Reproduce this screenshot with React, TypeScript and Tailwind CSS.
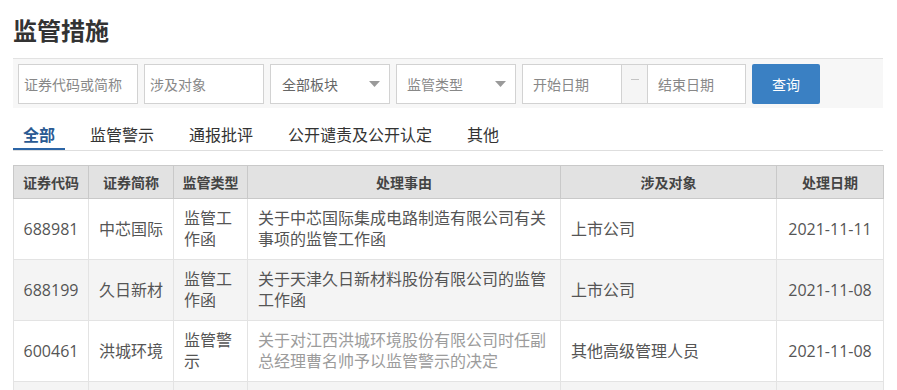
import React from "react";

const rows = [
  {
    code: "688981",
    name: "中芯国际",
    type: "监管工作函",
    reason: "关于中芯国际集成电路制造有限公司有关事项的监管工作函",
    target: "上市公司",
    date: "2021-11-11",
    visited: false,
    bg: "bg-white",
  },
  {
    code: "688199",
    name: "久日新材",
    type: "监管工作函",
    reason: "关于天津久日新材料股份有限公司的监管工作函",
    target: "上市公司",
    date: "2021-11-08",
    visited: false,
    bg: "bg-[#f4f4f4]",
  },
  {
    code: "600461",
    name: "洪城环境",
    type: "监管警示",
    reason: "关于对江西洪城环境股份有限公司时任副总经理曹名帅予以监管警示的决定",
    target: "其他高级管理人员",
    date: "2021-11-08",
    visited: true,
    bg: "bg-white",
  },
];

function Arrow() {
  return (
    <svg width="11" height="6" viewBox="0 0 11 6" className="shrink-0">
      <path d="M0 0 L11 0 L5.5 6 Z" fill="#9a9a9a" />
    </svg>
  );
}

export default function App() {
  const font = { fontFamily: '"Open Sans", "Noto Sans CJK SC", sans-serif' };
  return (
    <div className="w-[897px] h-[390px] overflow-hidden bg-white" style={font}>
      <div className="w-[870px] ml-[13px]">
        <h1 className="pt-[14px] text-[24px] leading-[34px] font-bold text-[#333]">监管措施</h1>

        <div className="mt-[10px] border-t border-[#e2e2e2] bg-[#f7f7f7] pl-[5px] pt-[5px] pb-[4px] flex items-center gap-[6px] text-[14px]">
          <div className="w-[120px] h-[40px] border border-[#d2d2d2] bg-white flex items-center pl-[5px] text-[#888]">
            证券代码或简称
          </div>
          <div className="w-[120px] h-[40px] border border-[#d2d2d2] bg-white flex items-center pl-[5px] text-[#888]">
            涉及对象
          </div>
          <div className="w-[120px] h-[40px] border border-[#d2d2d2] bg-white flex items-center justify-between pl-[11px] pr-[9px] text-[#666]">
            <span>全部板块</span>
            <Arrow />
          </div>
          <div className="w-[120px] h-[40px] border border-[#d2d2d2] bg-white flex items-center justify-between pl-[10px] pr-[9px] text-[#888]">
            <span>监管类型</span>
            <Arrow />
          </div>
          <div className="flex items-stretch h-[40px]">
            <div className="w-[100px] border border-[#d2d2d2] bg-white flex items-center pl-[10px] text-[#888]">
              开始日期
            </div>
            <div className="w-[25px] border-y border-[#d2d2d2] bg-[#f5f5f5] flex justify-center">
              <span className="mt-[14px] w-[8px] h-px bg-[#c4c4c4]" />
            </div>
            <div className="w-[99px] border border-[#d2d2d2] bg-white flex items-center pl-[10px] text-[#888]">
              结束日期
            </div>
          </div>
          <button className="w-[68px] h-[40px] rounded-[2px] bg-[#3a80c3] text-white text-[14px]">查询</button>
        </div>

        <div className="flex border-b border-[#dedede] text-[16px] leading-[22px] gap-[15px]">
          {["全部", "监管警示", "通报批评", "公开谴责及公开认定", "其他"].map((t, i) => (
            <div
              key={t}
              className={
                i === 0
                  ? "px-[10px] pt-[16px] pb-[2px] border-b-2 border-[#2c65a6] font-bold text-[#2a5a92]"
                  : "px-[10px] pt-[16px] pb-[2px] border-b-2 border-transparent text-[#333]"
              }
            >
              {t}
            </div>
          ))}
        </div>

        <table className="mt-[14px] w-[870px] table-fixed border-collapse">
          <colgroup>
            <col className="w-[75px]" />
            <col className="w-[85px]" />
            <col className="w-[74px]" />
            <col className="w-[313px]" />
            <col className="w-[216px]" />
            <col className="w-[107px]" />
          </colgroup>
          <thead>
            <tr className="h-[33px] bg-[#e2e2e2] text-[14px] font-bold text-[#444]">
              {["证券代码", "证券简称", "监管类型", "处理事由", "涉及对象", "处理日期"].map((h) => (
                <th key={h} className="border border-[#c9c9c9] text-center font-bold p-0">
                  {h}
                </th>
              ))}
            </tr>
          </thead>
          <tbody className="text-[16px] leading-[21px] text-[#555]">
            {rows.map((r) => (
              <tr key={r.code} className={`h-[61px] ${r.bg}`}>
                <td className="border border-[#e3e3e3] text-center px-[6px]">{r.code}</td>
                <td className="border border-[#e3e3e3] text-center px-[6px]">{r.name}</td>
                <td className="border border-[#e3e3e3] px-[10px]">{r.type}</td>
                <td className={`border border-[#e3e3e3] px-[10px] ${r.visited ? "text-[#9c9c9c]" : ""}`}>{r.reason}</td>
                <td className="border border-[#e3e3e3] px-[10px]">{r.target}</td>
                <td className="border border-[#e3e3e3] text-center px-[6px]">{r.date}</td>
              </tr>
            ))}
            <tr className="h-[61px] bg-[#f4f4f4]">
              <td className="border border-[#e3e3e3]" />
              <td className="border border-[#e3e3e3]" />
              <td className="border border-[#e3e3e3]" />
              <td className="border border-[#e3e3e3]" />
              <td className="border border-[#e3e3e3]" />
              <td className="border border-[#e3e3e3]" />
            </tr>
          </tbody>
        </table>
      </div>
    </div>
  );
}
